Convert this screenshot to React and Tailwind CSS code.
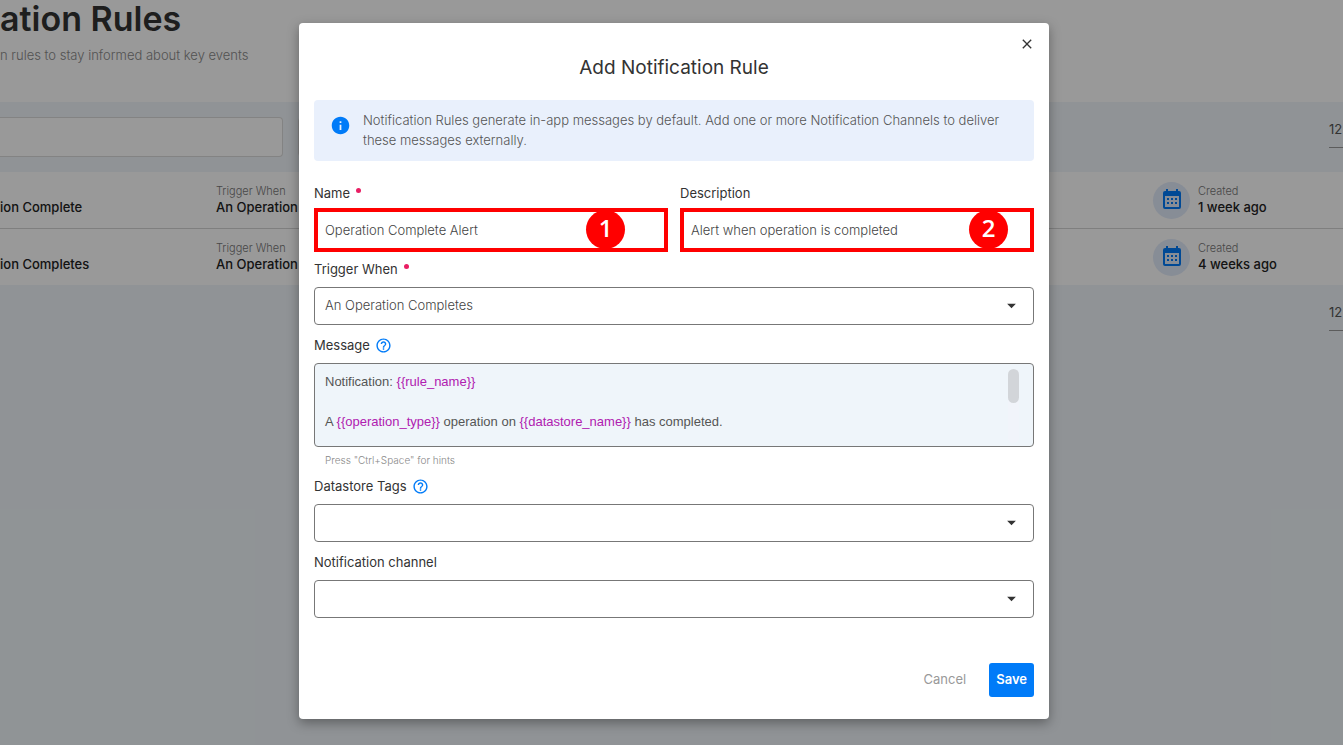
import React from "react";
import { MdInfo, MdHelpOutline, MdArrowDropDown, MdClose } from "react-icons/md";

const rules = [
  { name: "ion Complete", trigger: "An Operation", created: "1 week ago" },
  { name: "ion Completes", trigger: "An Operation", created: "4 weeks ago" },
];

function CalendarIcon() {
  return (
    <svg viewBox="0 0 18 20" className="h-[20px] w-[18px]" aria-hidden="true">
      <path
        fill="#007bf8"
        fillRule="evenodd"
        d="M3 0h2v2h8V0h2v2h1a2 2 0 0 1 2 2v14a2 2 0 0 1-2 2H2a2 2 0 0 1-2-2V4a2 2 0 0 1 2-2h1V0ZM2 7v11h14V7H2Zm2 2h2v2H4V9Zm4 0h2v2H8V9Zm4 0h2v2h-2V9ZM4 13h2v2H4v-2Zm4 0h2v2H8v-2Zm4 0h2v2h-2v-2Z"
      />
    </svg>
  );
}

function PageSize() {
  return (
    <div className="w-[14px] shrink-0 overflow-hidden border-b border-[#999] pb-[8px] text-[13px] leading-5 text-[#555]">
      12
    </div>
  );
}

function Page() {
  return (
    <main className="min-h-screen bg-[#f0f6fa]">
      <header className="h-[102px] bg-white">
        <h1 className="text-[34px] leading-[38px] font-semibold text-[#333]">ation Rules</h1>
        <p className="pt-[7px] text-[13px] leading-5 font-light text-[#8a8a8a]">
          n rules to stay informed about key events
        </p>
      </header>
      <div className="flex items-start justify-between py-[15px]">
        <div className="flex gap-[15px]">
          <input
            aria-label="Search"
            className="h-[40px] w-[283px] rounded-r border border-l-0 border-[#dadada] bg-white px-3 text-[13px]"
          />
          <button aria-label="Filter" className="h-[40px] w-[200px] rounded border border-[#dadada] bg-white" />
        </div>
        <div className="pt-[2px]">
          <PageSize />
        </div>
      </div>
      <ul className="divide-y divide-[#d4d4d4] bg-white">
        {rules.map((r) => (
          <li key={r.created} className="flex h-[57px] items-center text-[13px] leading-4 last:h-[56px]">
            <div className="w-[216px] pt-[14px] font-medium text-[#222]">{r.name}</div>
            <div className="flex-1 pb-[2px]">
              <div className="text-[11px] font-light text-[#777]">Trigger When</div>
              <div className="font-medium text-[#222]">{r.trigger}</div>
            </div>
            <div className="flex w-[190px] items-center gap-[8px]">
              <span className="flex size-[37px] items-center justify-center rounded-full bg-[#e2ebfa] pb-[2px]">
                <CalendarIcon />
              </span>
              <div className="pb-[2px]">
                <div className="text-[11px] font-light text-[#777]">Created</div>
                <div className="font-medium text-[#222]">{r.created}</div>
              </div>
            </div>
          </li>
        ))}
      </ul>
      <div className="flex justify-end pt-[17px]">
        <PageSize />
      </div>
    </main>
  );
}

function Label({ children, htmlFor, id, required, help }) {
  return (
    <div className="flex h-5 items-center">
      <label id={id} htmlFor={htmlFor} className="text-[13px] leading-5 text-[#333]">
        {children}
      </label>
      {required && <span className="mb-[5px] ml-[6px] size-[5px] rounded-full bg-[#e91e63]" />}
      {help && (
        <button type="button" aria-label={help} className="ml-[5px] text-[#007bf8]">
          <MdHelpOutline className="size-[17px]" />
        </button>
      )}
    </div>
  );
}

function MarkedInput({ id, label, required, value, step, badge }) {
  return (
    <div className="flex flex-col gap-[5px]">
      <Label htmlFor={id} required={required}>
        {label}
      </Label>
      <div className="relative">
        <input
          id={id}
          defaultValue={value}
          className="h-[44px] w-full border-4 border-[#ff0000] bg-white px-[7px] text-[13px] font-light text-[#444] outline-none"
        />
        <span
          className={
            "absolute top-[2px] flex size-[39px] items-center justify-center rounded-full bg-[#ff0000] pb-[4px] font-['Open_Sans',sans-serif] text-[24px] font-semibold text-white " +
            badge
          }
        >
          {step}
        </span>
      </div>
    </div>
  );
}

function Select({ id, label, required, help, options }) {
  return (
    <div className="flex flex-col gap-[8px]">
      <Label htmlFor={id} required={required} help={help}>
        {label}
      </Label>
      <div className="relative">
        <select
          id={id}
          className="block h-[38px] w-full appearance-none rounded border border-[#777] bg-white px-[10px] text-[13px] font-light text-[#444]"
        >
          {options.map((o) => (
            <option key={o}>{o}</option>
          ))}
        </select>
        <MdArrowDropDown className="pointer-events-none absolute top-[8px] right-[12px] size-[21px] text-[#333]" />
      </div>
    </div>
  );
}

function Token({ children }) {
  return <span className="text-[#b020b0]">{"{{" + children + "}}"}</span>;
}

function Dialog() {
  return (
    <form
      role="dialog"
      aria-labelledby="dialog-title"
      className="relative w-full max-w-[750px] rounded bg-white px-[15px] pt-[34px] pb-[22px] shadow-[0_4px_12px_rgba(0,0,0,0.35)]"
    >
      <button type="button" aria-label="Close" className="absolute top-[13px] right-[14px] text-[#333]">
        <MdClose className="size-[16px]" />
      </button>
      <h2 id="dialog-title" className="text-center text-[19px] leading-[22px] text-[#333]">
        Add Notification Rule
      </h2>
      <div className="mt-[21px] flex gap-[12px] rounded bg-[#e9f0fc] pt-[10px] pr-[30px] pb-[11px] pl-[16px] text-[#555]">
        <MdInfo className="mt-[5px] size-[21px] shrink-0 text-[#007bf8]" />
        <p className="text-[13px] leading-5 font-light">
          Notification Rules generate in-app messages by default. Add one or more Notification Channels to deliver
          these messages externally.
        </p>
      </div>

      <div className="mt-[22px] grid grid-cols-2 gap-[12px]">
        <MarkedInput id="name" label="Name" required value="Operation Complete Alert" step="1" badge="right-[43px]" />
        <MarkedInput id="description" label="Description" value="Alert when operation is completed" step="2" badge="right-[26px]" />
      </div>

      <div className="mt-[7px] flex flex-col gap-[10px]">
        <Select id="trigger" label="Trigger When" required options={["An Operation Completes"]} />
        <div>
          <Label id="message-label" help="Message help">
            Message
          </Label>
          <div className="mt-[8px] flex h-[84px] rounded border border-[#777] bg-[#eff5fa] pt-[8px] pr-[14px] pl-[10px]">
            <div
              role="textbox"
              aria-multiline="true"
              aria-labelledby="message-label"
              contentEditable
              suppressContentEditableWarning
              className="flex-1 font-['Liberation_Sans',sans-serif] text-[13px] leading-5 text-[#555] outline-none"
            >
              <div>
                Notification: <Token>rule_name</Token>
              </div>
              <div className="h-5" />
              <div>
                A <Token>operation_type</Token> operation on <Token>datastore_name</Token> has completed.
              </div>
            </div>
            <div className="-mt-[3px] h-[74px] w-[11px] rounded-full bg-[#f1f4fa]">
              <div className="h-[34px] rounded-full bg-[#d2d5d9]" />
            </div>
          </div>
          <p className="pt-[7px] pl-[11px] text-[10px] leading-3 font-light text-[#888]">Press "Ctrl+Space" for hints</p>
        </div>
        <Select id="tags" label="Datastore Tags" help="Datastore Tags help" options={[""]} />
        <Select id="channel" label="Notification channel" options={[""]} />
      </div>

      <div className="mt-[45px] flex justify-end gap-[15px] text-[13px]">
        <button type="button" className="h-[34px] px-[8px] text-[#999]">
          Cancel
        </button>
        <button type="submit" className="h-[34px] rounded-[3px] bg-[#007bf8] px-[7px] font-semibold text-white">
          Save
        </button>
      </div>
    </form>
  );
}

export default function App() {
  return (
    <div className="relative min-h-screen overflow-hidden font-['Inter',sans-serif]">
      <Page />
      <div className="absolute inset-0 flex items-start justify-center bg-black/40 pt-[23px] pl-[5px]">
        <Dialog />
      </div>
    </div>
  );
}
